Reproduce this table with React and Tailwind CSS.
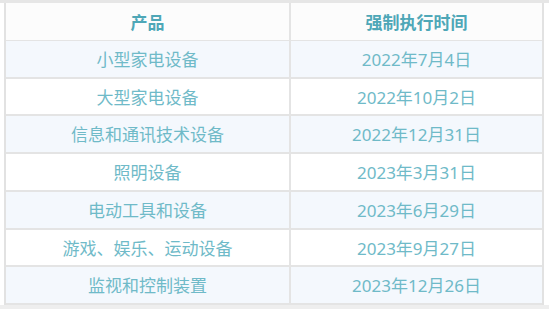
import React from 'react'

const rows = [
  ['小型家电设备', '2022年7月4日'],
  ['大型家电设备', '2022年10月2日'],
  ['信息和通讯技术设备', '2022年12月31日'],
  ['照明设备', '2023年3月31日'],
  ['电动工具和设备', '2023年6月29日'],
  ['游戏、娱乐、运动设备', '2023年9月27日'],
  ['监视和控制装置', '2023年12月26日']
]

const App = () => {
  return (
    <div
      className="w-[549px] h-[309px] bg-white overflow-hidden flex flex-col"
      style={{ fontFamily: '"Noto Sans", "Noto Sans CJK SC", sans-serif' }}
    >
      <div className="h-[3px] bg-[#e6e6e6] shrink-0" />
      <div className="ml-[4px] w-[540px] border-x-2 border-[#e2e2e2]">
        <div className="grid grid-cols-[285px_1fr] h-[37.75px] bg-[#fcfcfc] border-b border-[#e4e4e4] text-[17px] font-bold text-[#4ea7b7]">
          <div className="flex items-center justify-center pt-[2px] border-r-2 border-[#e4e4e4]">产品</div>
          <div className="flex items-center justify-center pt-[2px]">强制执行时间</div>
        </div>
        {rows.map(([name, date], i) => (
          <div
            key={name}
            className={`grid grid-cols-[285px_1fr] h-[37.75px] border-b-2 border-[#e4e4e4] text-[17px] text-[#6fbac8] ${
              i % 2 === 0 ? 'bg-[#f4f8fd]' : 'bg-white'
            }`}
          >
            <div className="flex items-center justify-center pt-[2px] border-r-2 border-[#e4e4e4]">{name}</div>
            <div className="flex items-center justify-center pt-[2px]">{date}</div>
          </div>
        ))}
      </div>
      <div className="flex-1 bg-[#eeeeee]" />
    </div>
  )
}

export default App
